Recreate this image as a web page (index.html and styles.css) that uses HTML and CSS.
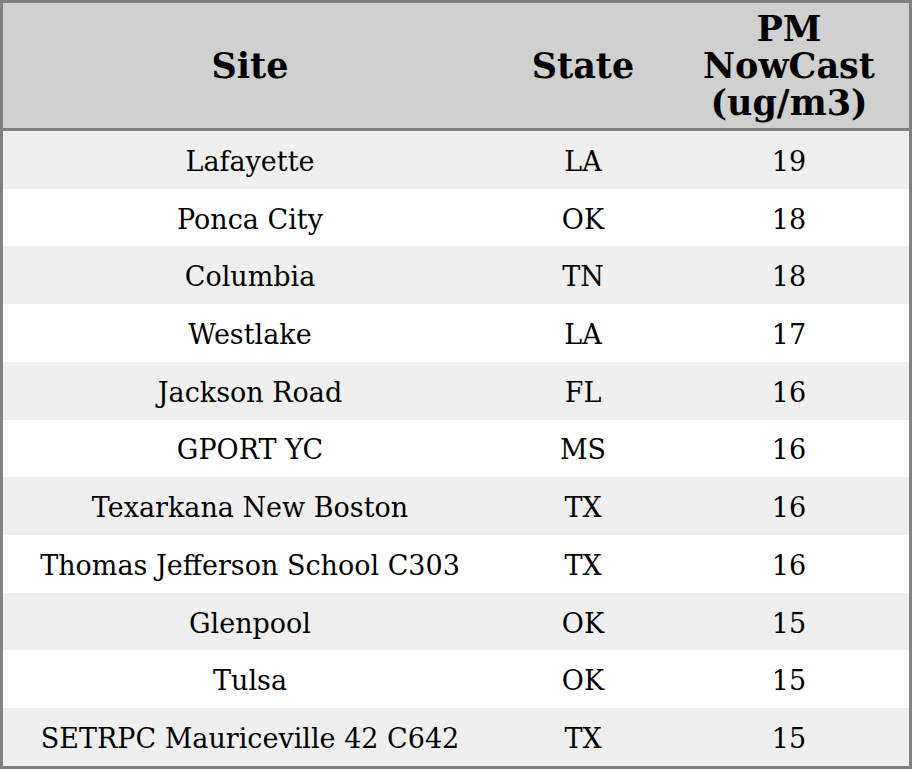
FILE: index.html
```html
<!DOCTYPE html>
<html>
<head>
<meta charset="utf-8">
<link rel="stylesheet" href="styles.css">
</head>
<body>
<table class="aq">
  <thead>
    <tr><th class="c-site">Site</th><th class="c-state">State</th><th class="c-pm">PM<br>NowCast<br>(ug/m3)</th></tr>
  </thead>
  <tbody>
    <tr><td>Lafayette</td><td>LA</td><td>19</td></tr>
    <tr><td>Ponca City</td><td>OK</td><td>18</td></tr>
    <tr><td>Columbia</td><td>TN</td><td>18</td></tr>
    <tr><td>Westlake</td><td>LA</td><td>17</td></tr>
    <tr><td>Jackson Road</td><td>FL</td><td>16</td></tr>
    <tr><td>GPORT YC</td><td>MS</td><td>16</td></tr>
    <tr><td>Texarkana New Boston</td><td>TX</td><td>16</td></tr>
    <tr><td>Thomas Jefferson School C303</td><td>TX</td><td>16</td></tr>
    <tr><td>Glenpool</td><td>OK</td><td>15</td></tr>
    <tr><td>Tulsa</td><td>OK</td><td>15</td></tr>
    <tr><td>SETRPC Mauriceville 42 C642</td><td>TX</td><td>15</td></tr>
  </tbody>
</table>
</body>
</html>
```
FILE: styles.css
```css
html, body { margin: 0; padding: 0; background: #ffffff; }
.aq {
  width: 912px;
  height: 769px;
  border-collapse: separate;
  border-spacing: 0;
  border: 3px solid #808080;
  font-family: "DejaVu Serif", serif;
  color: #000;
}
.aq th {
  background: #d0d0d0;
  font-size: 35px;
  font-weight: bold;
  line-height: 37px;
  height: 125px;
  padding: 0;
  border-bottom: 3px solid #808080;
  text-align: center;
  vertical-align: middle;
}
.aq .c-site { width: 494px; }
.aq .c-state { width: 172px; }
.aq td {
  font-size: 27px;
  text-align: center;
  height: 54px;
  padding: 3px 0 0 0;
  vertical-align: middle;
}
.aq tbody tr:nth-child(odd) td { background: #efefef; }
.aq tbody tr:nth-child(even) td { background: #ffffff; }
```
